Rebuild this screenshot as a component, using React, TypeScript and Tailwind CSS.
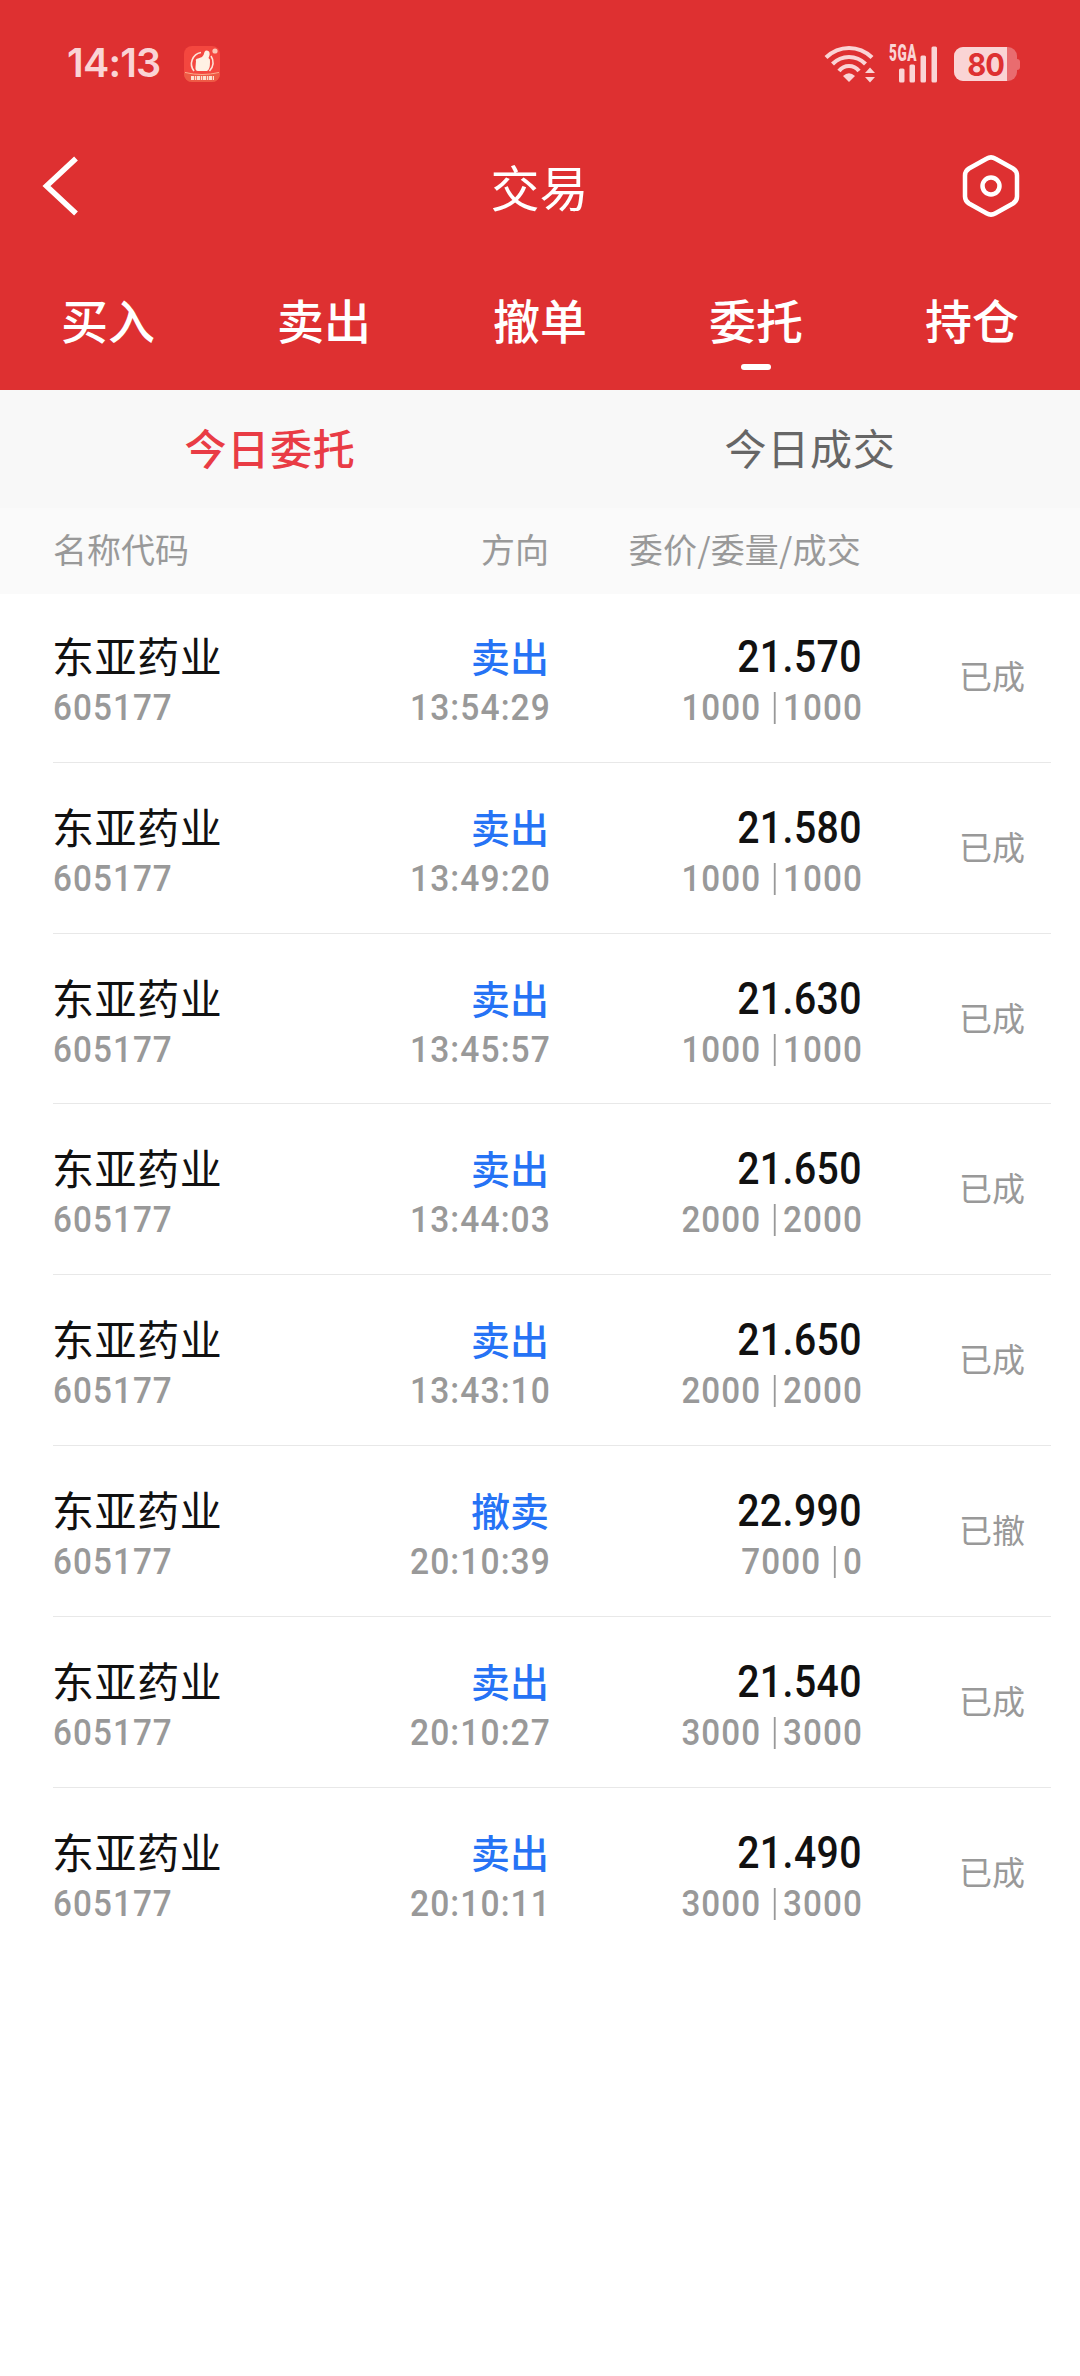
import React from "react";

type Order = {
  side: string;
  time: string;
  price: string;
  ordered: string;
  filled: string;
  status: string;
};

const STOCK = { name: "东亚药业", code: "605177" };

const orders: Order[] = [
  { side: "卖出", time: "13:54:29", price: "21.570", ordered: "1000", filled: "1000", status: "已成" },
  { side: "卖出", time: "13:49:20", price: "21.580", ordered: "1000", filled: "1000", status: "已成" },
  { side: "卖出", time: "13:45:57", price: "21.630", ordered: "1000", filled: "1000", status: "已成" },
  { side: "卖出", time: "13:44:03", price: "21.650", ordered: "2000", filled: "2000", status: "已成" },
  { side: "卖出", time: "13:43:10", price: "21.650", ordered: "2000", filled: "2000", status: "已成" },
  { side: "撤卖", time: "20:10:39", price: "22.990", ordered: "7000", filled: "0", status: "已撤" },
  { side: "卖出", time: "20:10:27", price: "21.540", ordered: "3000", filled: "3000", status: "已成" },
  { side: "卖出", time: "20:10:11", price: "21.490", ordered: "3000", filled: "3000", status: "已成" },
];

const tabs = ["买入", "卖出", "撤单", "委托", "持仓"];

function AppBadge() {
  return (
    <svg width="36" height="36" viewBox="0 0 36 36" className="ml-[25px]">
      <rect width="36" height="36" rx="8" fill="#f4473f" />
      <path d="M0 27 Q18 31 36 27 V28 A8 8 0 0 1 28 36 H8 A8 8 0 0 1 0 28 Z" fill="#ee5a45" />
      <path d="M1 26.500 Q18 30.500 35 26.500" stroke="#fbb08c" strokeWidth="1" fill="none" />
      <path d="M10 25 A11.500 11.500 0 0 1 17 6.500 M27 10 A11.500 11.500 0 0 1 25.500 25" stroke="#fde3d8" strokeWidth="1.600" fill="none" />
      <path d="M12 15 Q11 13 14 12.500 L18 11 Q20 9 20.500 6 Q22 3.500 25 5.500 Q26.500 8 24.500 12 Q26.500 13 26 16 Q26 24 23 25 H14 Q11 25 11.500 21 Z" fill="#fff1e4" />
      <circle cx="31" cy="5" r="2.600" fill="#fbc5b4" />
      <path d="M7 32 H30" stroke="#fde0cf" strokeWidth="4" strokeDasharray="3 0.8 1.500 0.700" />
    </svg>
  );
}

function WifiIcon() {
  return (
    <svg width="52" height="38" viewBox="0 0 52 38" fill="none">
      <g stroke="#fad4d5" strokeWidth="4.200">
        <path d="M2 12.500 Q12 3 25 3 Q38 3 48 12.500" />
        <path d="M8.500 19 Q15.500 12 25 12 Q34.500 12 41.500 19" />
        <path d="M15 26 Q19 21 25 21 Q31 21 35 26" />
      </g>
      <path d="M19 31 Q25 25.500 31 31 L25 37 Z" fill="#fad4d5" />
      <path d="M41 28 L46 22.500 L51 28 Z M41 32 L46 37.500 L51 32 Z" fill="#fad4d5" />
    </svg>
  );
}

function SignalIcon() {
  return (
    <div className="relative ml-[13px] h-[38px] w-[49px]">
      <svg width="49" height="38" viewBox="0 0 49 38" fill="#fad4d5">
        <rect x="10" y="23.500" width="5.500" height="14" rx="1.500" />
        <rect x="20.500" y="19.500" width="5.500" height="18" rx="1.500" />
        <rect x="31.500" y="10.500" width="5.500" height="27" rx="1.500" />
        <rect x="42.500" y="1.500" width="5.500" height="36" rx="1.500" />
      </svg>
      <span className="absolute left-0 top-[-1px] origin-left scale-x-[0.59] font-['Roboto'] text-[23px] font-black leading-[20px] tracking-[1px] text-[#fad4d5]">
        5GA
      </span>
    </div>
  );
}

function BatteryIcon() {
  return (
    <div className="ml-[16px] flex h-[34px] items-center">
      <div className="flex h-[34px] w-[63px] overflow-hidden rounded-[9px] bg-[#e96c6f]">
        <div className="flex w-[53px] items-center justify-end bg-[#fad4d5] pr-[3px] font-['Inter'] text-[31px] font-bold leading-none tracking-[-1px] text-[#de3031]">
          <span className="origin-right scale-x-[0.94]">80</span>
        </div>
      </div>
      <div className="h-[11px] w-[3px] rounded-r-[3px] bg-[#e96c6f]" />
    </div>
  );
}

function StatusBar() {
  return (
    <div className="flex h-[128px] items-center pl-[67px] pr-[60px]">
      <span className="w-[92px] font-['Inter'] text-[39.500px] font-semibold leading-none tracking-[-0.800px] text-[#fad4d5]">
        14:13
      </span>
      <AppBadge />
      <div className="flex-1" />
      <WifiIcon />
      <SignalIcon />
      <BatteryIcon />
    </div>
  );
}

function TitleBar() {
  return (
    <div className="grid h-[116px] grid-cols-[1fr_auto_1fr] items-center pl-[40px] pr-[58px]">
      <svg width="64" height="64" viewBox="0 0 64 64" fill="none">
        <path d="M36 4.500 L6.500 32 L36 59.500" stroke="#fff" strokeWidth="5.500" />
      </svg>
      <h1 className="ml-[17px] text-[49px] font-normal leading-[60px]">交易</h1>
      <svg width="64" height="64" viewBox="0 0 64 64" fill="none" stroke="#fff" strokeWidth="4.500" className="-mr-px justify-self-end">
        <path d="M27.500 4.700 Q32 2 36.500 4.700 L54 14.500 Q58 17 58 21.500 V42.500 Q58 47 54 49.500 L36.500 59.300 Q32 62 27.500 59.300 L10 49.500 Q6 47 6 42.500 V21.500 Q6 17 10 14.500 Z" />
        <circle cx="32" cy="32" r="8.500" />
      </svg>
    </div>
  );
}

function TradeTabs() {
  return (
    <nav className="grid h-[146px] grid-cols-5">
      {tabs.map((tab) => (
        <div key={tab} className="flex flex-col items-center pt-[45px]">
          <span className="text-[47px] font-medium leading-[60px]">{tab}</span>
          {tab === "委托" && <i className="mt-[15px] h-[6px] w-[30px] rounded-full bg-white" />}
        </div>
      ))}
    </nav>
  );
}

function OrderRow({ order }: { order: Order }) {
  return (
    <li className="ml-[53px] mr-[29px] flex h-[170.83px] border-b border-[#e8e8e8] pt-[37px] text-[#999999] last:border-transparent">
      <div className="w-[247px]">
        <div className="-ml-px text-[42px] leading-[52px] tracking-[0.6px] text-[#111111]">{STOCK.name}</div>
        <div className="mt-px origin-left scale-x-[0.91] font-['Roboto'] text-[36.500px] font-medium leading-[52px] tracking-[1.200px]">{STOCK.code}</div>
      </div>
      <div className="w-[249px] text-right">
        <div className="text-[39px] font-medium leading-[52px] text-[#2673f5]">{order.side}</div>
        <div className="-mr-[2px] mt-px origin-right scale-x-[0.92] font-['Roboto'] text-[36.500px] font-medium leading-[52px] tracking-[1.200px]">{order.time}</div>
      </div>
      <div className="w-[312px] text-right">
        <div className="-mr-px origin-right scale-x-[0.9] font-['Roboto'] text-[43.500px] font-medium leading-[58px] tracking-[0.500px] text-[#111111]">
          {order.price}
        </div>
        <div className="-mr-[2px] mt-[-5px] flex origin-right scale-x-[0.91] items-center justify-end font-['Roboto'] text-[36.500px] font-medium leading-[52px] tracking-[1.200px]">
          <span>{order.ordered}</span>
          <i className="ml-[14px] mr-[8px] h-[32px] w-[2px] bg-[#999999]" />
          <span>{order.filled}</span>
        </div>
      </div>
      <div className="ml-auto mr-[26px] pt-[21px] text-[33px] leading-[50px]">{order.status}</div>
    </li>
  );
}

export default function App() {
  return (
    <div className="h-[2376px] w-[1080px] overflow-hidden bg-white font-['Noto_Sans_CJK_SC',sans-serif]">
      <header className="h-[390px] bg-[#de3031] text-white">
        <StatusBar />
        <TitleBar />
        <TradeTabs />
      </header>

      <div className="grid h-[118px] grid-cols-2 bg-[#f8f8f8] text-center text-[42px] leading-[114px] tracking-[0.700px]">
        <span className="font-medium text-[#e93c45]">今日委托</span>
        <span className="text-[#666666]">今日成交</span>
      </div>

      <div className="flex h-[86px] bg-[#fafafa] pl-[53px] text-[34px] leading-[82px] text-[#999999]">
        <span className="w-[247px]">名称代码</span>
        <span className="w-[249px] text-right">方向</span>
        <span className="w-[312px] text-right tracking-[0.200px]">委价/委量/成交</span>
      </div>

      <ul className="-mt-[2px]">
        {orders.map((order) => (
          <OrderRow key={order.time} order={order} />
        ))}
      </ul>
    </div>
  );
}
